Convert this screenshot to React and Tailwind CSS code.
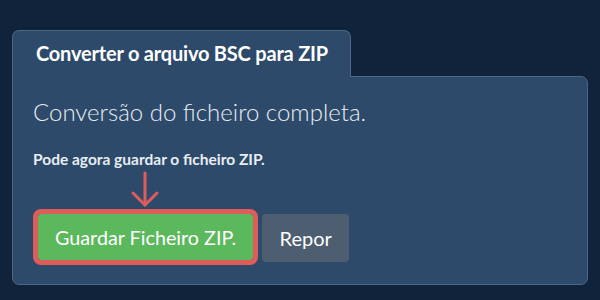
import React from "react";

const App = () => {
  return (
    <div
      className="w-[600px] h-[300px] bg-[#11233a] pt-[30px] px-[12px] overflow-hidden"
      style={{ fontFamily: "Lato, 'Noto Sans', sans-serif" }}
    >
      {/* Tab */}
      <div className="flex">
        <div className="relative z-10 -mb-px bg-[#2d4a6a] border border-b-0 border-[#4b6686] rounded-t-[7px] h-[47px] pl-[23px] pr-[22px] flex items-center">
          <h1 className="text-[20px] font-bold text-white tracking-[-0.2px] leading-none pb-[2px]">
            Converter o arquivo BSC para ZIP
          </h1>
        </div>
      </div>

      {/* Panel */}
      <div className="w-[576px] bg-[#2d4a6a] border border-[#4b6686] rounded-[7px] rounded-tl-none pt-[21px] pl-[20px] pb-[22px]">
        <p className="text-[24px] font-light text-[#e8edf2] leading-[1.2]">
          Conversão do ficheiro completa.
        </p>
        <p className="mt-[23px] text-[15.5px] font-bold text-[#e8edf2] leading-[1.2]">
          Pode agora guardar o ficheiro ZIP.
        </p>

        <div className="relative mt-[46px] flex items-start gap-[9px] pl-[5px]">
          {/* Arrow */}
          <svg
            className="absolute left-[97px] top-[-43px]"
            width="30"
            height="38"
            viewBox="0 0 30 38"
            fill="none"
            stroke="#e05c5a"
            strokeWidth="3"
            strokeLinecap="round"
            strokeLinejoin="round"
          >
            <path d="M15 2 V34" />
            <path d="M3 22 L15 34 L27 22" />
          </svg>

          <button className="h-[46px] px-[17px] bg-[#5cb85c] text-white text-[19.75px] rounded-[3px] outline-[5px] outline-solid outline-[#de5c5a] leading-none">
            Guardar Ficheiro ZIP.
          </button>
          <button className="h-[48px] px-[17.5px] bg-[#4d5e70] text-white text-[20px] rounded-[4px] leading-none">
            Repor
          </button>
        </div>
      </div>
    </div>
  );
};

export default App;
